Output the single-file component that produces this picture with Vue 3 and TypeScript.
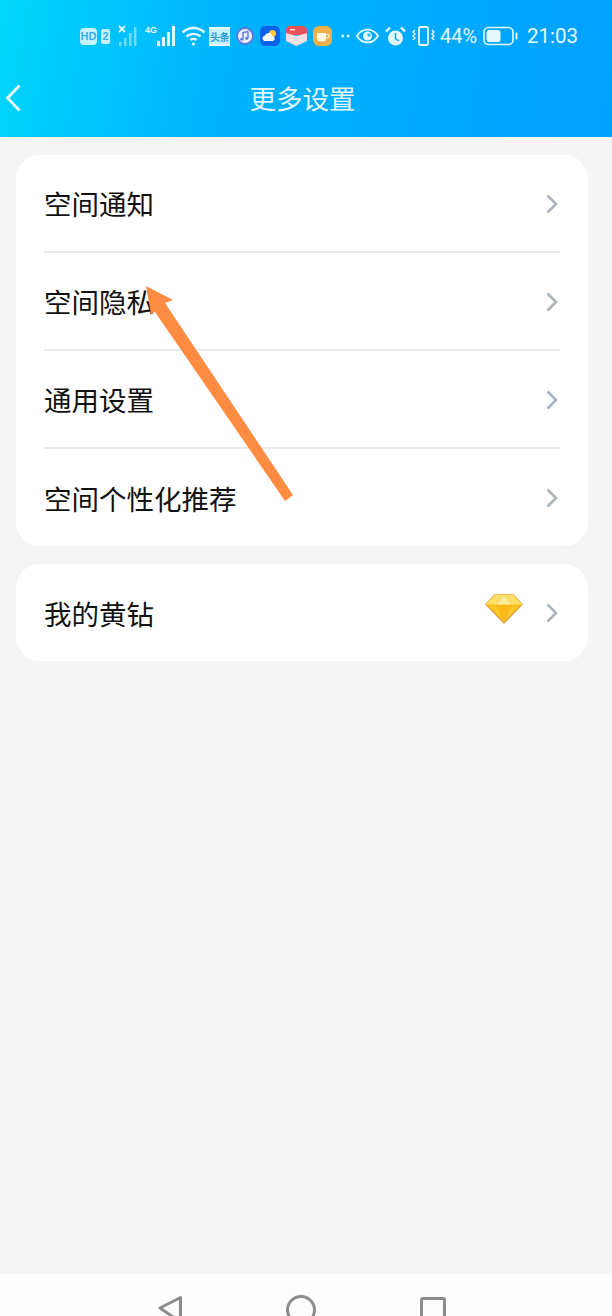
<script setup lang="ts">
const groups = [
  ['空间通知', '空间隐私', '通用设置', '空间个性化推荐'],
  ['我的黄钻'],
]
</script>

<template>
  <div class="page">
    <header class="header">
      <div class="status">
        <span class="hd">HD</span>
        <span class="sim">2</span>
        <svg class="i-sig1" width="21" height="22" viewBox="0 0 21 22">
          <path d="M1 1l6 6M7 1L1 7" stroke="#d8f6ff" stroke-width="1.800" fill="none" />
          <g fill="#6fdcf9">
            <rect x="1" y="17" width="2.500" height="4" />
            <rect x="6" y="13" width="2.500" height="8" />
            <rect x="11" y="8" width="2.500" height="13" />
            <rect x="16" y="2" width="2.500" height="19" />
          </g>
        </svg>
        <svg class="i-sig2" width="31" height="22" viewBox="0 0 31 22">
          <text x="0" y="8" class="g4">4G</text>
          <g fill="#e4f9ff">
            <rect x="12" y="16" width="3" height="5" />
            <rect x="17" y="12" width="3" height="9" />
            <rect x="22" y="7" width="3" height="14" />
            <rect x="27" y="1" width="3" height="20" />
          </g>
        </svg>
        <svg class="i-wifi" width="25" height="22" viewBox="0 0 25 22" fill="none" stroke="#e4f9ff" stroke-width="2.400">
          <path d="M1.500 7.500C8 1.500 17 1.500 23.500 7.500" />
          <path d="M5.500 11.500C9.500 8 15.500 8 19.500 11.500" />
          <path d="M9.500 15C11.500 13.500 13.500 13.500 15.500 15" />
          <circle cx="12.500" cy="19" r="1.500" fill="#e4f9ff" stroke="none" />
        </svg>
        <span class="toutiao">头条</span>
        <svg class="i-app" width="18" height="18" viewBox="0 0 18 18">
          <circle cx="9" cy="9" r="9" fill="#5b78d8" />
          <circle cx="9" cy="9" r="7" fill="#e8edfb" />
          <path d="M7 12V5.500l5-1V11" stroke="#5b78d8" stroke-width="1.400" fill="none" />
          <circle cx="5.800" cy="12.200" r="1.500" fill="#5b78d8" />
          <circle cx="10.800" cy="11.200" r="1.500" fill="#5b78d8" />
        </svg>
        <svg class="i-app" width="20" height="20" viewBox="0 0 20 20">
          <rect width="20" height="20" rx="5" fill="#0a62e8" />
          <circle cx="12.500" cy="7.500" r="3.500" fill="#ffc83d" />
          <path d="M4 15a3 3 0 0 1 1-5.600 4 4 0 0 1 7.500 .6A2.600 2.600 0 0 1 13 15z" fill="#f4fbff" />
        </svg>
        <svg class="i-app" width="21" height="20" viewBox="0 0 21 20">
          <path d="M3 0h15l3 3v4L18 9H3L0 7V3z" fill="#e8505a" />
          <path d="M0 7l10.500 3L21 7v8l-10.500 5L0 15z" fill="#f6dfe2" />
          <rect x="4" y="3" width="5" height="1.500" fill="#ffd6d6" />
        </svg>
        <svg class="i-app" width="19" height="20" viewBox="0 0 19 20">
          <rect width="19" height="20" rx="6" fill="#eeb04a" />
          <path d="M4 7h9v5a3.500 3.500 0 0 1-3.500 3.500h-2A3.500 3.500 0 0 1 4 12z" fill="#fff6e4" />
          <path d="M13 8.500h1.500a1.500 1.500 0 0 1 0 3.500H13" stroke="#fff6e4" fill="none" />
        </svg>
        <svg class="i-dots" width="9" height="4" viewBox="0 0 9 4">
          <circle cx="1.800" cy="2" r="1.500" fill="#d8f6ff" />
          <circle cx="7.200" cy="2" r="1.500" fill="#d8f6ff" />
        </svg>
        <svg class="i-eye" width="23" height="16" viewBox="0 0 23 16">
          <path d="M1 8c5-8.500 16-8.500 21 0-5 8.500-16 8.500-21 0z" fill="none" stroke="#e4f9ff" stroke-width="1.800" />
          <circle cx="11.500" cy="8" r="4.500" fill="#e4f9ff" />
          <circle cx="13" cy="7" r="1.800" fill="#3fb9fb" />
        </svg>
        <svg class="i-alarm" width="21" height="21" viewBox="0 0 21 21">
          <circle cx="10.500" cy="12" r="7.500" fill="#e4f9ff" />
          <path d="M10.500 7v5.500l3.500 2.500" stroke="#14a6f5" stroke-width="1.500" fill="none" />
          <path d="M1 5.500L5 1.500M20 5.500L16 1.500" stroke="#e4f9ff" stroke-width="2.400" />
        </svg>
        <svg class="i-vib" width="23" height="20" viewBox="0 0 23 20" fill="none" stroke="#e4f9ff">
          <rect x="7" y="1" width="9" height="18" rx="1.500" stroke-width="1.800" />
          <path d="M3 4l-2 2 2 2-2 2 2 2-2 2M20 4l2 2-2 2 2 2-2 2 2 2" stroke-width="1.400" />
        </svg>
        <span class="pct">44%</span>
        <svg class="i-batt" width="35" height="20" viewBox="0 0 35 20">
          <rect x="1" y="1.500" width="29" height="17" rx="4.500" fill="none" stroke="#e4f9ff" stroke-width="1.600" />
          <rect x="3.500" y="4" width="14" height="12" rx="2.500" fill="#e4f9ff" />
          <rect x="32.500" y="6.500" width="2" height="7" rx="1" fill="#e4f9ff" />
        </svg>
        <span class="time">21:03</span>
      </div>
      <div class="titlebar">
        <svg class="back" width="18" height="30" viewBox="0 0 18 30">
          <path d="M15.500 2.500L3.500 15l12 12.500" fill="none" stroke="#e9fbff" stroke-width="2.800" />
        </svg>
        <h1 class="title">更多设置</h1>
      </div>
    </header>

    <main class="content">
      <section v-for="(group, g) in groups" :key="g" class="card">
        <div v-for="label in group" :key="label" class="row">
          <span class="label">{{ label }}</span>
          <svg v-if="label === '我的黄钻'" class="gem" width="38" height="30" viewBox="0 0 38 30">
            <path d="M9.500 1h19L37 10.500 19 29 1 10.500z" fill="#f9c525" stroke="#e2a63c" stroke-width="1.500" stroke-linejoin="round" />
            <path d="M9.500 1h19l8.500 9.500H1z" fill="#ffdf66" />
            <path d="M12 10.500L19 2l7 8.500z" fill="#ffeb9c" />
            <path d="M11 11h16l-8 16z" fill="#fbb818" />
          </svg>
          <svg class="chevron" width="12" height="20" viewBox="0 0 12 20">
            <path d="M1.500 1.500L10 10l-8.500 8.500" fill="none" stroke="#a9b4bf" stroke-width="2.600" />
          </svg>
        </div>
      </section>
    </main>

    <nav class="navbar">
      <svg width="24" height="42" viewBox="0 0 24 42">
        <path d="M22.500 23.500V48L2 34z" fill="none" stroke="#8c8c8c" stroke-width="3" stroke-linejoin="round" />
      </svg>
      <svg width="30" height="42" viewBox="0 0 30 42">
        <circle cx="15" cy="36" r="13.500" fill="none" stroke="#8c8c8c" stroke-width="3" />
      </svg>
      <svg width="26" height="42" viewBox="0 0 26 42">
        <rect x="1.500" y="24.500" width="23" height="30" rx="1.500" fill="none" stroke="#8c8c8c" stroke-width="3" />
      </svg>
    </nav>

    <svg class="arrow" width="612" height="1316" viewBox="0 0 612 1316">
      <path d="M146 286L173 300 165 303 293 495 285 501 155 312 151 314z" fill="#ff8c40" />
    </svg>
  </div>
</template>

<style scoped>
.page {
  position: relative;
  width: 612px;
  height: 1316px;
  display: flex;
  flex-direction: column;
  overflow: hidden;
  background: #f4f4f4;
  font-family: "Noto Sans CJK SC", "Noto Sans", sans-serif;
}

.header {
  height: 137px;
  flex: none;
  background: linear-gradient(100deg, #00d6fb 0%, #00b4fd 35%, #00a0ff 100%);
}

.status {
  height: 72px;
  display: flex;
  align-items: center;
  padding-left: 80px;
  color: #e4f9ff;
}

.hd {
  width: 17px;
  height: 17px;
  border-radius: 4px;
  background: #c8f2ff;
  color: #28b4f0;
  font: 700 11px/17px "Liberation Sans", sans-serif;
  text-align: center;
}

.sim {
  width: 9px;
  height: 15px;
  margin-left: 4px;
  border-radius: 2px;
  background: #c8f2ff;
  color: #28b4f0;
  font: 700 11px/15px "Liberation Sans", sans-serif;
  text-align: center;
}

.i-sig1 { margin-left: 8px; }
.i-sig2 { margin-left: 6px; }
.i-wifi { margin-left: 5px; }

.g4 {
  font: 700 9px "Liberation Sans", sans-serif;
  fill: #e4f9ff;
}

.toutiao {
  width: 21px;
  height: 19px;
  margin-left: 3px;
  background: #c8f2ff;
  border-top: 2px solid #e4f9ff;
  border-bottom: 2px solid #e4f9ff;
  box-sizing: border-box;
  color: #1f9ee0;
  font-size: 10px;
  font-weight: 700;
  line-height: 15px;
  text-align: center;
  white-space: nowrap;
  letter-spacing: -0.5px;
}

.i-app { margin-left: 6px; }
.i-dots { margin-left: 9px; }
.i-eye { margin-left: 6px; }
.i-alarm { margin-left: 6px; }
.i-vib { margin-left: 6px; }

.pct {
  margin-left: 5px;
  width: 38px;
  font: 400 20px/1 Roboto, sans-serif;
  white-space: nowrap;
}

.i-batt { margin-left: 5px; }

.time {
  margin-left: 9px;
  font: 400 20.500px/1 Roboto, sans-serif;
}

.titlebar {
  position: relative;
  height: 54px;
  display: flex;
  align-items: center;
  justify-content: center;
}

.back {
  position: absolute;
  left: 4px;
  top: 11px;
}

.title {
  margin: -2px 0 0 -7px;
  color: #e6f8ff;
  font-size: 26.500px;
  font-weight: 400;
  line-height: 54px;
}

.content {
  flex: 1;
  display: flex;
  flex-direction: column;
  gap: 18px;
  padding: 18px 24px 0 16px;
}

.card {
  padding: 0 28px;
  background: #fff;
  border-radius: 24px;
}

.row {
  height: 96px;
  display: flex;
  align-items: center;
  border-bottom: 2px solid #e8eaea;
}

.row:last-child {
  height: 97px;
  border-bottom: 0;
}

.label {
  flex: 1;
  color: #111;
  font-size: 27.500px;
  line-height: 40px;
}

.gem {
  margin-right: 23px;
  margin-top: -8px;
}

.chevron {
  margin-right: 2px;
  margin-top: 1px;
}

.navbar {
  height: 42px;
  flex: none;
  display: flex;
  justify-content: center;
  background: #fdfdfd;
  padding-right: 8px;
  gap: 104px;
}

.arrow {
  position: absolute;
  left: 0;
  top: 0;
  pointer-events: none;
}
</style>
